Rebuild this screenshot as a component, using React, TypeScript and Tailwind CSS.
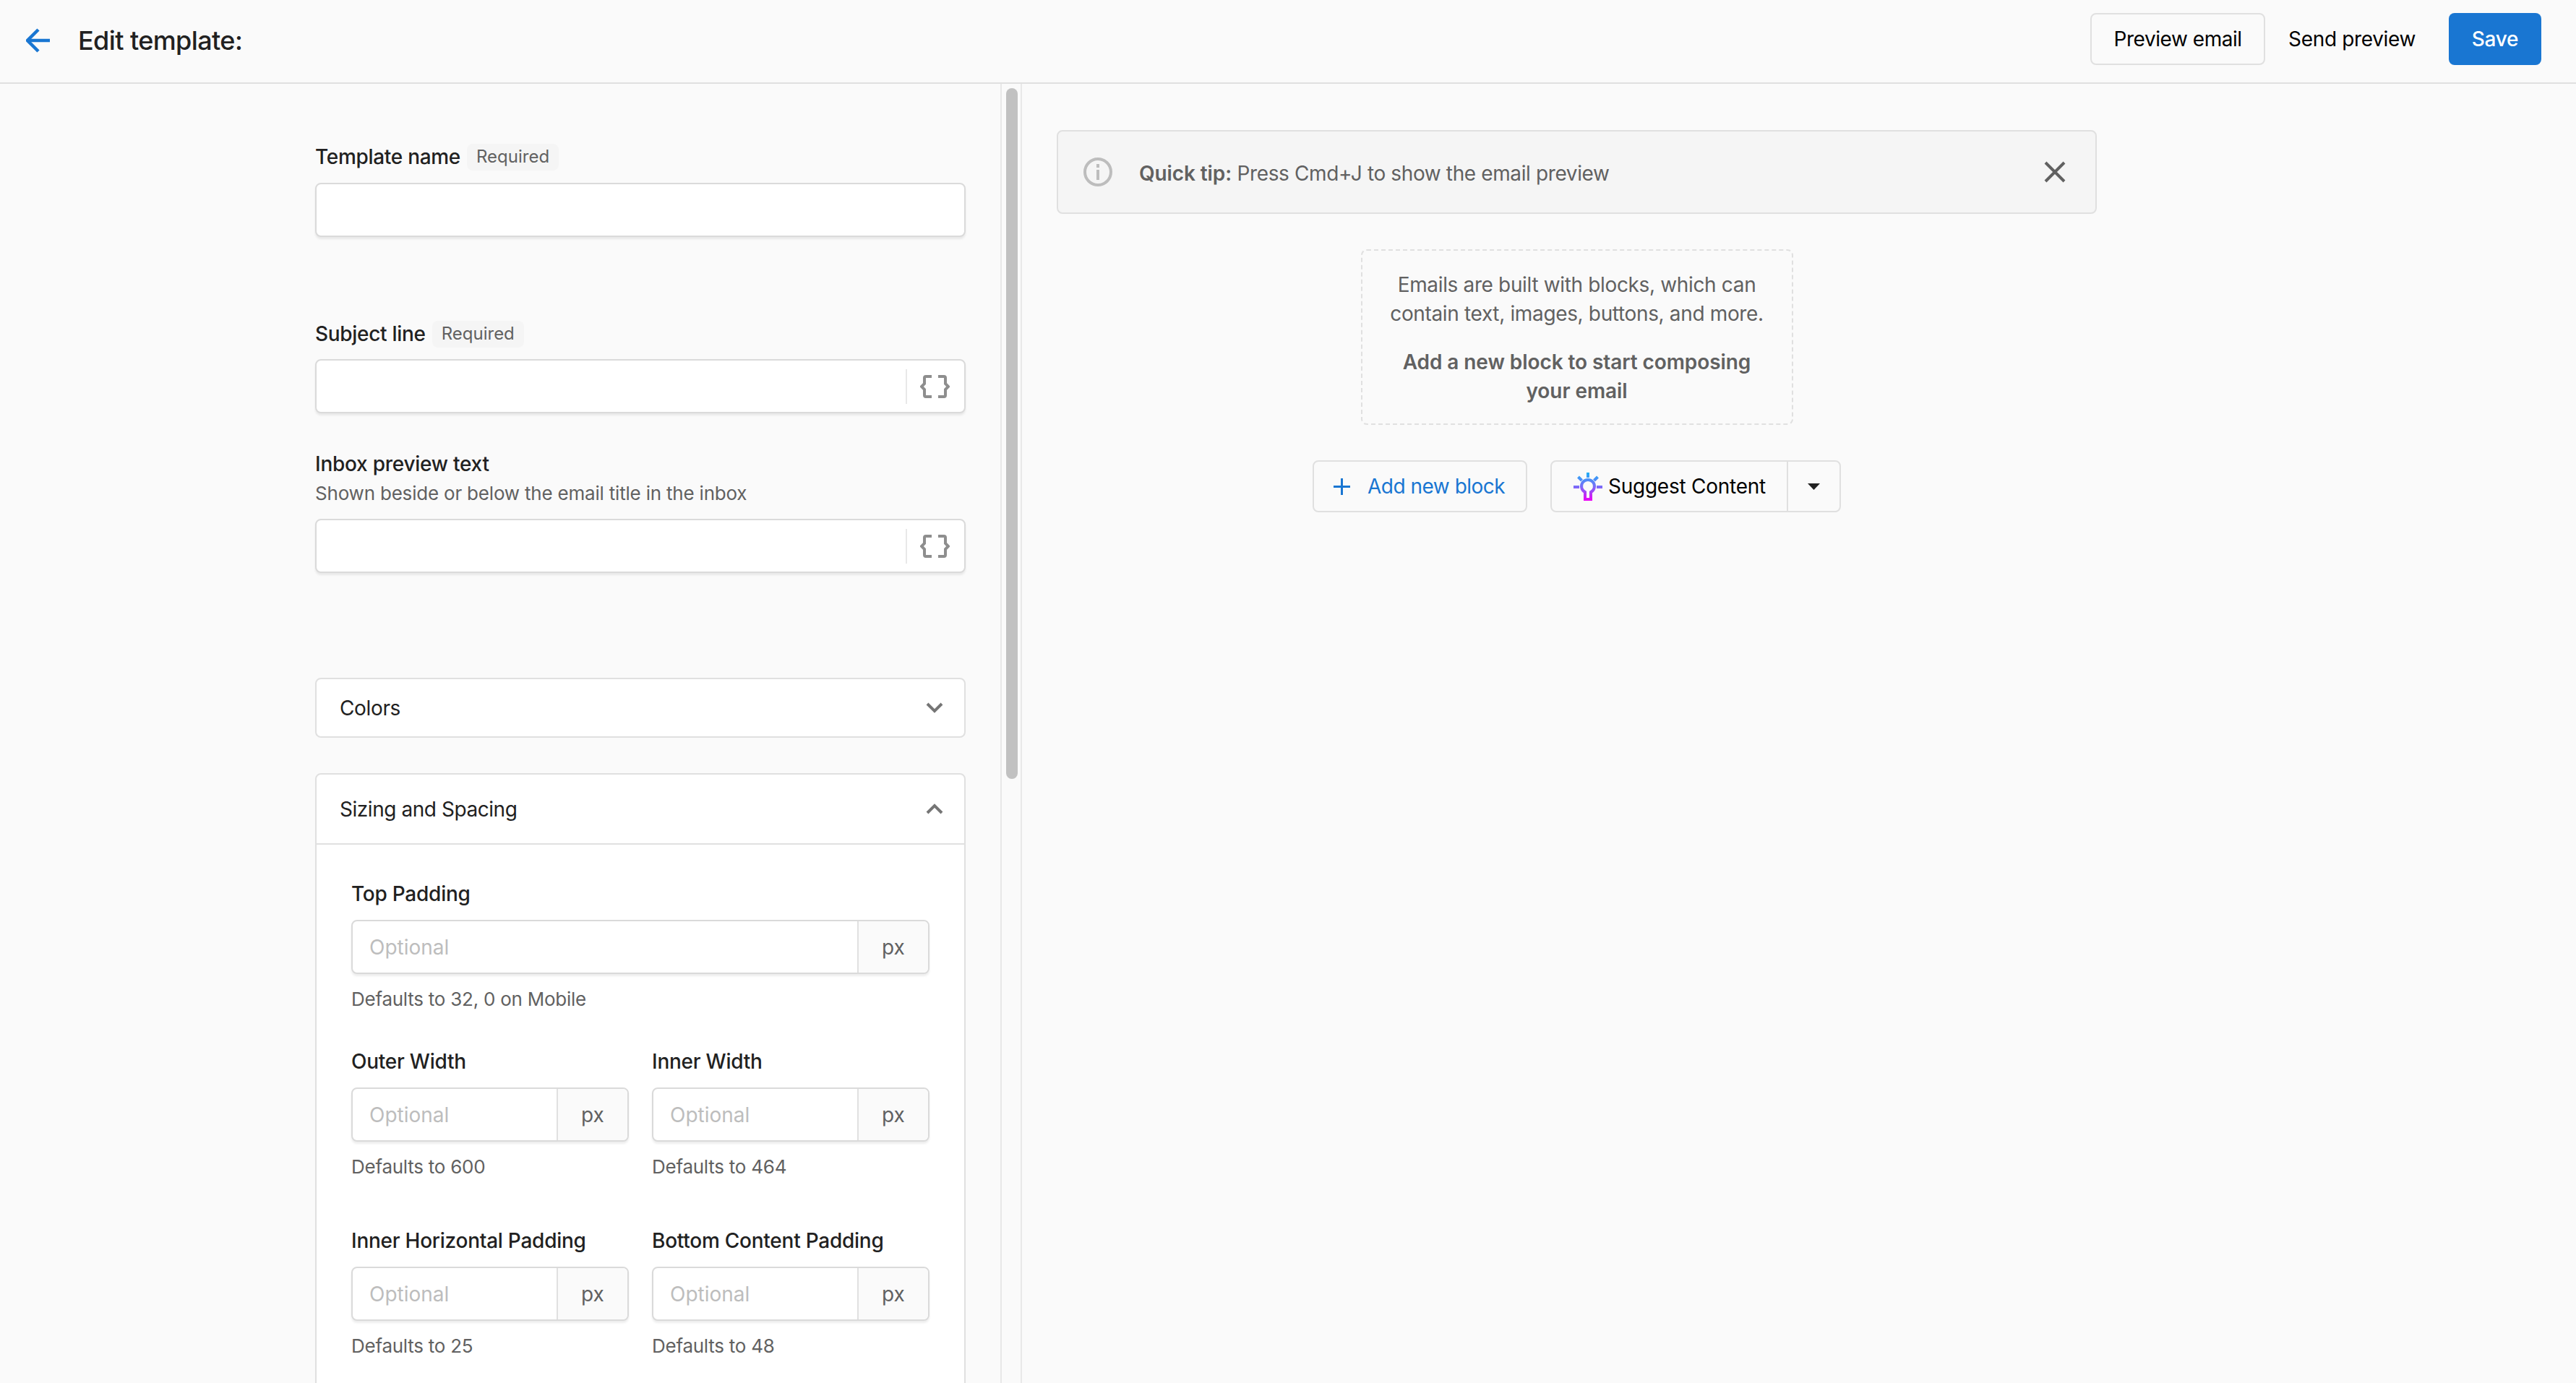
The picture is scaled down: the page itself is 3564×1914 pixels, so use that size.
import { useState } from "react";

const inputBox =
  "flex h-[75px] bg-white border-2 border-[#dadada] rounded-lg shadow-[0_3px_3px_rgba(0,0,0,0.07)] overflow-hidden";

const Braces = () => (
  <svg width="41" height="32" viewBox="0 0 41 32" fill="none" stroke="#8e8e8e" strokeWidth="4">
    <path d="M16 2H8a2 2 0 0 0-2 2v8l-4 4 4 4v8a2 2 0 0 0 2 2h8" />
    <path d="M25 2h8a2 2 0 0 1 2 2v8l4 4-4 4v8a2 2 0 0 1-2 2h-8" />
  </svg>
);

const Chevron = ({ up }: { up?: boolean }) => (
  <svg width="24" height="15" viewBox="0 0 24 15" fill="none" stroke="#757575" strokeWidth="4" className={up ? "rotate-180" : ""}>
    <path d="M2 2l10 10L22 2" />
  </svg>
);

const Bulb = () => (
  <svg width="41" height="39" viewBox="0 0 41 39" fill="none" strokeWidth="4">
    <defs>
      <linearGradient id="bulb" gradientUnits="userSpaceOnUse" x1="20" y1="0" x2="20" y2="39">
        <stop offset="0" stopColor="#1fb0f5" />
        <stop offset="0.5" stopColor="#7a6cf8" />
        <stop offset="1" stopColor="#ee00f5" />
      </linearGradient>
    </defs>
    <g stroke="url(#bulb)">
      <path d="M20 0v7" />
      <path d="M6.5 6l5 5" />
      <path d="M33.5 6l-5 5" />
      <path d="M0 20h8" />
      <path d="M32 20h8" />
      <path d="M16 37V27a9 9 0 1 1 8 0v10z" />
    </g>
  </svg>
);

const Required = ({ name }: { name: string }) => (
  <div className="flex h-[38px] items-center gap-[9px]">
    <span className="text-[28px] font-medium tracking-[-0.3px] text-[#212121]">{name}</span>
    <span className="flex h-[37px] items-center rounded-lg bg-[#f5f5f5] px-[13px] text-[24px] text-[#616161]">Required</span>
  </div>
);

const BraceInput = () => (
  <div className={`${inputBox} items-center`}>
    <input className="h-full flex-1 bg-transparent outline-none" />
    <div className="flex h-[48px] items-center border-l-2 border-[#e8e8e8] pl-[18px] pr-[20px]">
      <Braces />
    </div>
  </div>
);

const UnitInput = ({ label, help }: { label: string; help: string }) => (
  <div>
    <div className="h-[38px] text-[28px] font-medium leading-[38px] tracking-[-0.25px] text-[#212121]">{label}</div>
    <div className={`${inputBox} mt-[17px]`}>
      <input
        placeholder="Optional"
        className="min-w-0 flex-1 bg-transparent pl-[23px] text-[28px] outline-none placeholder:text-[#bdbdbd]"
      />
      <div className="flex w-[98px] items-center justify-center border-l-2 border-[#e0e0e0] bg-[#fafafa] text-[28px] text-[#616161]">px</div>
    </div>
    <div className="mt-[17px] h-[37px] text-[26px] leading-[36px] tracking-[-0.25px] text-[#616161]">{help}</div>
  </div>
);

export default function App() {
  const [showTip, setShowTip] = useState(true);

  return (
    <div className="flex h-[1914px] flex-col overflow-hidden bg-[#fafafa] font-['Inter',sans-serif]">
      <header className="flex h-[116px] shrink-0 items-center border-b-2 border-[#e0e0e0] pl-[36px] pr-[48px]">
        <svg width="33" height="34" viewBox="0 0 33 34" fill="none" stroke="#1976d2" strokeWidth="4.5" className="-mt-[2px]">
          <path d="M33 17H3" />
          <path d="M17 2L2 17l15 15" />
        </svg>
        <h1 className="ml-[39px] -mt-[2px] text-[36px] font-medium tracking-[-0.6px] text-[#212121]">Edit template:</h1>
        <div className="ml-auto -mt-[6px] flex items-center">
          <button className="h-[72px] w-[242px] rounded-lg border-2 border-[#e0e0e0] text-[28px] tracking-[-0.45px] text-black">Preview email</button>
          <button className="h-[72px] px-[32px] text-[28px] tracking-[-0.35px] text-black">Send preview</button>
          <button className="ml-[14px] h-[72px] w-[128px] rounded-lg bg-[#1976d2] text-[28px] font-medium tracking-[-0.3px] text-white">Save</button>
        </div>
      </header>

      <div className="flex min-h-0 flex-1">
        <div className="w-[1384px] shrink-0 overflow-hidden pl-[436px]">
          <div className="w-[900px] pt-[82px]">
            <Required name="Template name" />
            <input className={`${inputBox} mt-[17px] w-full outline-none`} />

            <div className="mt-[115px]">
              <Required name="Subject line" />
            </div>
            <div className="mt-[16px]">
              <BraceInput />
            </div>

            <div className="mt-[50px] h-[40px] text-[28px] font-medium leading-[40px] tracking-[-0.25px] text-[#212121]">Inbox preview text</div>
            <div className="mt-[3px] h-[36px] text-[26px] leading-[36px] tracking-[-0.2px] text-[#616161]">Shown beside or below the email title in the inbox</div>
            <div className="mt-[17px]">
              <BraceInput />
            </div>

            <div className="mt-[145px] flex h-[83px] items-center justify-between rounded-lg border-2 border-[#e0e0e0] bg-white pl-[32px] pr-[29px]">
              <span className="text-[28px] tracking-[-0.35px] text-[#212121]">Colors</span>
              <Chevron />
            </div>

            <div className="mt-[49px] rounded-t-lg border-2 border-[#e0e0e0] bg-white">
              <div className="flex h-[97px] items-center justify-between border-b-2 border-[#e0e0e0] pl-[32px] pr-[29px]">
                <span className="text-[28px] tracking-[-0.45px] text-[#212121]">Sizing and Spacing</span>
                <Chevron up />
              </div>
              <div className="w-[848px] pl-[48px] pt-[49px]">
                <UnitInput label="Top Padding" help="Defaults to 32, 0 on Mobile" />
                <div className="mt-[48px] grid grid-cols-2 gap-x-[32px] gap-y-[64px]">
                  <UnitInput label="Outer Width" help="Defaults to 600" />
                  <UnitInput label="Inner Width" help="Defaults to 464" />
                  <UnitInput label="Inner Horizontal Padding" help="Defaults to 25" />
                  <UnitInput label="Bottom Content Padding" help="Defaults to 48" />
                </div>
                <div className="h-[200px]" />
              </div>
            </div>
          </div>
        </div>

        {/* fake scrollbar */}
        <div className="w-[30px] shrink-0 border-x-2 border-[#e8e8e8] pl-[6px] pt-[6px]">
          <div className="h-[956px] w-[16px] rounded-full bg-[#c1c1c1]" />
        </div>

        <main className="min-w-0 flex-1 pl-[48px] pt-[64px]">
          <div className="flex w-[1439px] flex-col items-center">
            {showTip && (
              <div className="mb-[49px] flex h-[116px] w-full items-center rounded-lg border-2 border-[#e0e0e0] bg-[#f5f5f5] pl-[35px] pr-[41px]">
                <svg width="40" height="40" viewBox="0 0 40 40" fill="none" stroke="#bdbdbd" strokeWidth="4">
                  <circle cx="20" cy="20" r="18" />
                  <path d="M20 17v14" />
                  <path d="M20 9v5" />
                </svg>
                <p className="ml-[37px] mt-[3px] text-[28px] tracking-[-0.38px] text-[#616161]">
                  <b className="font-semibold tracking-[-0.1px]">Quick tip:</b> Press Cmd+J to show the email preview
                </p>
                <button onClick={() => setShowTip(false)} className="ml-auto">
                  <svg width="30" height="30" viewBox="0 0 30 30" fill="none" stroke="#616161" strokeWidth="4" className="block">
                    <path d="M2 2l26 26M28 2L2 28" />
                  </svg>
                </button>
              </div>
            )}

            <div className="h-[243px] w-[598px] rounded-lg border-2 border-dashed border-[#e0e0e0] px-[30px] pt-[27px] text-center text-[28px] leading-[40px] tracking-[-0.35px] text-[#616161]">
              <p>Emails are built with blocks, which can contain text, images, buttons, and more.</p>
              <p className="mt-[27px] font-semibold tracking-[-0.08px]">Add a new block to start composing your email</p>
            </div>

            <div className="mt-[49px] flex gap-[32px]">
              <button className="flex h-[72px] w-[297px] items-center rounded-lg border-2 border-[#e0e0e0] pl-[27px] text-[28px] tracking-[-0.5px] text-[#1976d2]">
                <svg width="23" height="23" viewBox="0 0 23 23" fill="none" stroke="#1976d2" strokeWidth="3">
                  <path d="M11.5 0v23M0 11.5h23" />
                </svg>
                <span className="ml-[24px]">Add new block</span>
              </button>
              <div className="flex h-[72px] w-[402px] items-stretch rounded-lg border-2 border-[#e0e0e0]">
                <button className="flex flex-1 items-center pl-[30px] text-[28px] tracking-[-0.25px] text-black">
                  <Bulb />
                  <span className="ml-[7px]">Suggest Content</span>
                </button>
                <button className="flex w-[73px] items-center justify-center border-l-2 border-[#e0e0e0]">
                  <svg width="17" height="9" viewBox="0 0 17 9" fill="#212121">
                    <path d="M0 0h17l-8.5 9z" />
                  </svg>
                </button>
              </div>
            </div>
          </div>
        </main>
      </div>
    </div>
  );
}
